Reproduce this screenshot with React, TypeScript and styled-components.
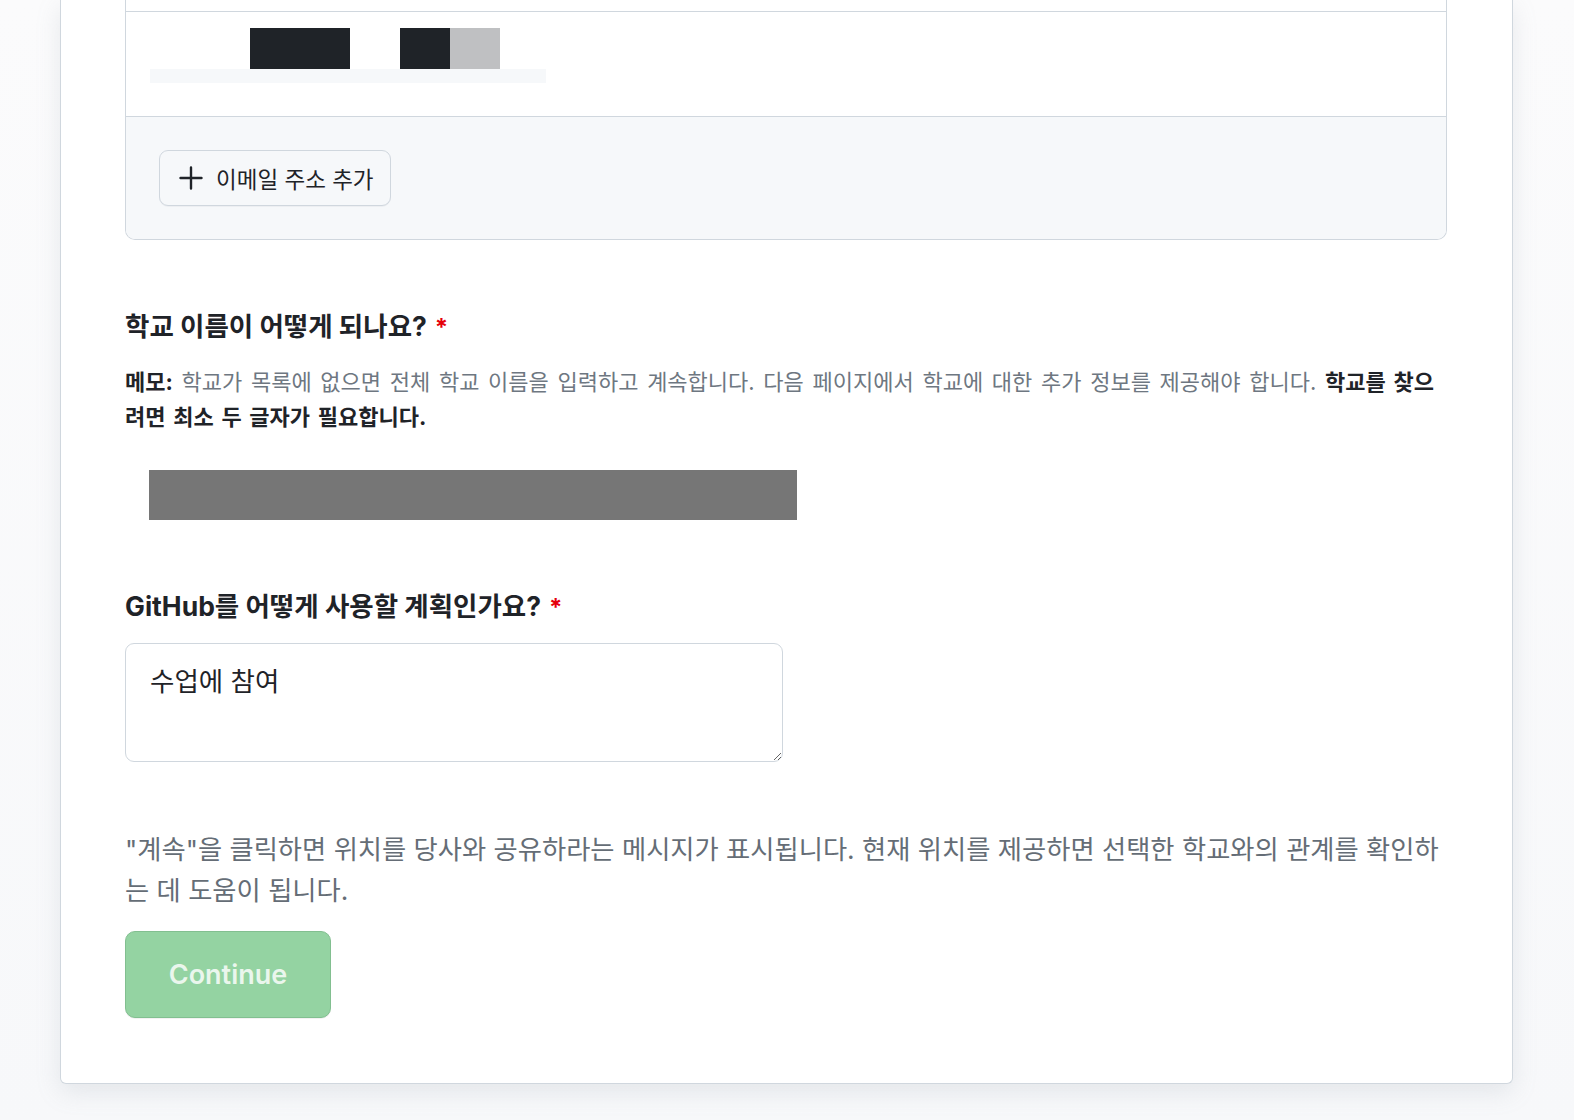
import React from 'react';
import styled, { createGlobalStyle } from 'styled-components';

const GlobalStyle = createGlobalStyle`
  html, body {
    margin: 0;
    padding: 0;
  }
  body {
    background: linear-gradient(180deg, #fbfbfc 0%, #f7f8fa 100%);
    font-family: Inter, "Noto Sans CJK KR", "Noto Sans", sans-serif;
    color: #1f2328;
    min-height: 1120px;
  }
`;

const Page = styled.div`
  padding: 0 61px 40px 60px;
`;

const Card = styled.div`
  background: #ffffff;
  border: 1px solid #d0d7de;
  border-top-width: 0;
  border-radius: 0 0 6px 6px;
  box-shadow: 0 8px 24px rgba(140, 149, 159, 0.18);
  padding: 0 65px 65px 64px;
`;

const EmailBox = styled.div`
  border: 1.5px solid #d0d7de;
  border-top-width: 0;
  border-radius: 0 0 10px 10px;
  overflow: hidden;
`;

const PrevRow = styled.div`
  height: 11px;
  border-bottom: 1.5px solid #d0d7de;
`;

const EmailRow = styled.div`
  padding: 16px 23px 33px 24px;
  border-bottom: 1.5px solid #d0d7de;
`;

const RedactLine = styled.div`
  display: flex;
  padding-left: 100px;
  height: 41px;
`;

const Redact = styled.div<{ $w: number; $c: string; $ml?: number }>`
  width: ${(p) => p.$w}px;
  height: 100%;
  background: ${(p) => p.$c};
  margin-left: ${(p) => p.$ml ?? 0}px;
`;

const RedactBar = styled.div`
  width: 396px;
  height: 14px;
  background: #f6f8fa;
`;

const EmailFooter = styled.div`
  background: #f6f8fa;
  padding: 33px 33px 33px;
`;

const AddButton = styled.button`
  display: inline-flex;
  align-items: center;
  gap: 13px;
  height: 56px;
  padding: 0 16px 0 19px;
  background: #f6f8fa;
  border: 1.5px solid #d0d7de;
  border-radius: 9px;
  box-shadow: 0 1px 0 rgba(31, 35, 40, 0.04);
  font-family: Inter, "Noto Sans CJK KR", sans-serif;
  font-size: 22.5px;
  color: #1f2328;
  cursor: pointer;
`;

const Section = styled.div<{ $mt: number }>`
  margin-top: ${(p) => p.$mt}px;
`;

const Heading = styled.h3`
  margin: 0;
  font-size: 26.5px;
  line-height: 36px;
  font-weight: 700;
  color: #1f2328;
`;

const Required = styled.span`
  color: #e5000b;
  margin-left: 8px;
  font-size: 24px;
`;

const Note = styled.p`
  margin: 19px 0 0;
  font-size: 22px;
  line-height: 35px;
  word-spacing: 2.5px;
  color: #6e7781;
`;

const Strong = styled.strong`
  color: #1f2328;
  font-weight: 700;
`;

const SchoolRedact = styled.div`
  margin: 35px 0 0 24px;
  width: 648px;
  height: 50px;
  background: #767676;
`;

const TextArea = styled.textarea`
  display: block;
  box-sizing: border-box;
  margin-top: 17px;
  width: 658px;
  height: 119px;
  padding: 19px 24px;
  border: 1.5px solid #d0d7de;
  border-radius: 9px;
  font-family: Inter, "Noto Sans CJK KR", sans-serif;
  font-size: 26.5px;
  line-height: 36px;
  color: #1f2328;
  background: #ffffff;
  resize: vertical;
  outline: none;
`;

const Disclaimer = styled.p`
  margin: 67px 0 0;
  font-size: 26.3px;
  line-height: 41px;
  color: #656d76;
`;

const ContinueButton = styled.button`
  display: block;
  margin-top: 20px;
  width: 206px;
  height: 87px;
  background: #94d3a2;
  border: 1.5px solid #82bf90;
  border-radius: 10px;
  box-shadow: 0 1px 0 rgba(31, 35, 40, 0.06);
  color: rgba(255, 255, 255, 0.82);
  font-family: Inter, "Noto Sans", sans-serif;
  font-size: 27px;
  font-weight: 600;
  cursor: not-allowed;
`;

const PlusIcon = () => (
  <svg width="24" height="24" viewBox="0 0 24 24" fill="none" stroke="#1f2328" strokeWidth="2.4" strokeLinecap="round">
    <path d="M12 1.5v21M1.5 12h21" />
  </svg>
);

export default function App() {
  return (
    <>
      <GlobalStyle />
      <Page>
        <Card>
          <EmailBox>
            <PrevRow />
            <EmailRow>
              <RedactLine>
                <Redact $w={100} $c="#1f2328" />
                <Redact $w={50} $c="#1f2328" $ml={50} />
                <Redact $w={50} $c="#bfc0c2" />
              </RedactLine>
              <RedactBar />
            </EmailRow>
            <EmailFooter>
              <AddButton type="button">
                <PlusIcon />
                이메일 주소 추가
              </AddButton>
            </EmailFooter>
          </EmailBox>

          <Section $mt={68}>
            <Heading>
              학교 이름이 어떻게 되나요?<Required>*</Required>
            </Heading>
            <Note>
              <Strong>메모:</Strong> 학교가 목록에 없으면 전체 학교 이름을 입력하고 계속합니다. 다음 페이지에서 학교에 대한 추가 정보를 제공해야 합니다.{' '}
              <Strong>학교를 찾으려면 최소 두 글자가 필요합니다.</Strong>
            </Note>
            <SchoolRedact />
          </Section>

          <Section $mt={68}>
            <Heading>
              GitHub를 어떻게 사용할 계획인가요?<Required>*</Required>
            </Heading>
            <TextArea defaultValue="수업에 참여" />
          </Section>

          <Disclaimer>
            "계속"을 클릭하면 위치를 당사와 공유하라는 메시지가 표시됩니다. 현재 위치를 제공하면 선택한 학교와의 관계를 확인하는 데 도움이 됩니다.
          </Disclaimer>
          <ContinueButton type="button" disabled>
            Continue
          </ContinueButton>
        </Card>
      </Page>
    </>
  );
}
